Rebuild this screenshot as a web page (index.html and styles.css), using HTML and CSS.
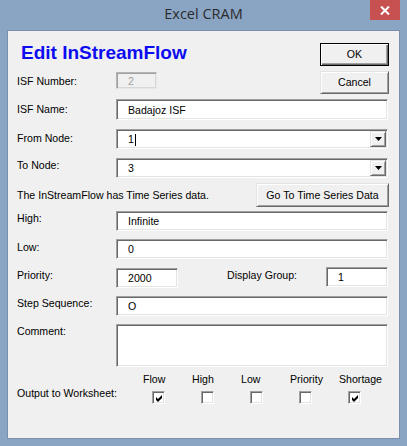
FILE: index.html
```html
<!DOCTYPE html>
<html>
<head>
<meta charset="utf-8">
<link rel="stylesheet" href="styles.css">
</head>
<body>
<div class="window">
  <div class="titlebar">
    <span class="title">Excel CRAM</span>
    <div class="close"><svg width="10" height="9" viewBox="0 0 10 9"><path d="M1 0.5 L9 8.5 M9 0.5 L1 8.5" stroke="#fff" stroke-width="2"/></svg></div>
  </div>
  <div class="client">
    <div class="row head">
      <h1 class="heading">Edit InStreamFlow</h1>
      <button class="btn btn-default">OK</button>
    </div>
    <div class="row r-num">
      <span class="lbl">ISF Number:</span>
      <div class="field num disabled">2</div>
      <button class="btn cancel">Cancel</button>
    </div>
    <div class="row r-name">
      <span class="lbl">ISF Name:</span>
      <div class="field wide">Badajoz ISF</div>
    </div>
    <div class="row r-from">
      <span class="lbl">From Node:</span>
      <div class="field wide combo"><span>1</span><span class="caret"></span><span class="drop"><svg width="7" height="4" viewBox="0 0 7 4"><path d="M0 0 H7 L3.5 4 Z" fill="#000"/></svg></span></div>
    </div>
    <div class="row r-to">
      <span class="lbl">To Node:</span>
      <div class="field wide combo"><span>3</span><span class="drop"><svg width="7" height="4" viewBox="0 0 7 4"><path d="M0 0 H7 L3.5 4 Z" fill="#000"/></svg></span></div>
    </div>
    <div class="row r-info">
      <span class="info">The InStreamFlow has Time Series data.</span>
      <button class="btn ts">Go To Time Series Data</button>
    </div>
    <div class="row r-high">
      <span class="lbl">High:</span>
      <div class="field wide">Infinite</div>
    </div>
    <div class="row r-low">
      <span class="lbl">Low:</span>
      <div class="field wide">0</div>
    </div>
    <div class="row r-prio">
      <span class="lbl">Priority:</span>
      <div class="field short">2000</div>
      <span class="lbl dg">Display Group:</span>
      <div class="field short dgf">1</div>
    </div>
    <div class="row r-step">
      <span class="lbl">Step Sequence:</span>
      <div class="field wide">O</div>
    </div>
    <div class="row r-comment">
      <span class="lbl">Comment:</span>
      <div class="field wide comment"></div>
    </div>
    <div class="row r-out">
      <span class="lbl out-lbl">Output to Worksheet:</span>
      <div class="checks">
        <span class="ch">Flow</span>
        <span class="ch">High</span>
        <span class="ch">Low</span>
        <span class="ch">Priority</span>
        <span class="ch">Shortage</span>
        <span class="cb"><svg width="7" height="7" viewBox="0 0 7 7"><path d="M0 2 L2 4 L6 0 L6 3 L2 7 L0 5 Z" fill="#000"/></svg></span>
        <span class="cb"></span>
        <span class="cb"></span>
        <span class="cb"></span>
        <span class="cb"><svg width="7" height="7" viewBox="0 0 7 7"><path d="M0 2 L2 4 L6 0 L6 3 L2 7 L0 5 Z" fill="#000"/></svg></span>
      </div>
    </div>
  </div>
</div>
</body>
</html>
```

FILE: styles.css
```css
html, body {
  margin: 0;
  padding: 0;
}
body {
  background: #8aa4c4;
  width: 407px;
  height: 446px;
  overflow: hidden;
  font-family: "Liberation Sans", Arial, sans-serif;
  font-size: 10.6px;
  color: #000;
}
.window {
  width: 407px;
  height: 446px;
}
.titlebar {
  height: 30px;
  display: grid;
  grid-template-columns: 1fr auto 1fr;
  align-items: start;
}
.title {
  grid-column: 2;
  font-family: "Open Sans", sans-serif;
  font-size: 14.5px;
  line-height: 20px;
  margin-top: 4px;
  color: #2b2b2b;
}
.close {
  grid-column: 3;
  justify-self: end;
  margin-right: 7px;
  width: 30px;
  height: 20px;
  background: #c75050;
  display: flex;
  align-items: center;
  justify-content: center;
}
.client {
  margin: 0 7px;
  height: 409px;
  box-sizing: border-box;
  border: 1px solid #7a8fab;
  background: #f0f0f0;
  padding: 12px 10px 0 9px;
}
.row {
  display: flex;
  align-items: flex-start;
}
.lbl {
  flex: none;
  width: 99px;
  line-height: 13px;
  padding-top: 1px;
  white-space: nowrap;
}
.heading {
  margin: 0 0 0 4px;
  font: bold 19px/19px "Liberation Sans", Arial, sans-serif;
  color: #0c0cf0;
}
.btn {
  flex: none;
  width: 69px;
  height: 23px;
  margin-left: auto;
  box-sizing: border-box;
  background: #f0f0f0;
  border: 1px solid;
  border-color: #e3e3e3 #696969 #696969 #e3e3e3;
  box-shadow: inset 1px 1px 0 #fff, inset -1px -1px 0 #a0a0a0;
  font: inherit;
  color: #000;
  padding: 0;
  line-height: 13px;
}
.btn-default {
  border-color: #000;
  box-shadow: inset 1px 1px 0 #fff, inset -1px -1px 0 #696969, inset -2px -2px 0 #a0a0a0;
}
.field {
  box-sizing: border-box;
  height: 20px;
  background: #fff;
  border: 1px solid;
  border-color: #a0a0a0 #fff #fff #a0a0a0;
  box-shadow: inset 1px 1px 0 #696969, inset -1px -1px 0 #e3e3e3;
  padding: 1px 0 0 11px;
  display: flex;
  align-items: center;
  line-height: 13px;
}
.wide {
  flex: 1;
  margin-right: 1px;
}
.num {
  width: 41px;
  height: 17px;
  margin-top: 1px;
}
.disabled {
  background: #f0f0f0;
  color: #a0a0a0;
  border-color: #b4b4b4 #e8e8e8 #e8e8e8 #b4b4b4;
  box-shadow: inset 1px 1px 0 #a0a0a0, inset -1px -1px 0 #d8d8d8;
}
.cancel {
  margin-left: auto;
}
.r-num { margin-top: 5px; }
.r-num .lbl { padding-top: 4px; }
.r-name { margin-top: 5px; }
.r-name .field { height: 21px; }
.r-name .lbl { padding-top: 4px; }
.r-from { margin-top: 9px; }
.r-from .lbl { padding-top: 3px; }
.r-to { margin-top: 9px; }
.combo {
  padding-right: 1px;
}
.caret {
  display: inline-block;
  width: 1px;
  height: 12px;
  background: #000;
  margin-left: 1px;
}
.drop {
  margin-left: auto;
  width: 16px;
  height: 16px;
  box-sizing: border-box;
  background: #f0f0f0;
  border: 1px solid;
  border-color: #e3e3e3 #696969 #696969 #e3e3e3;
  box-shadow: inset 1px 1px 0 #fff, inset -1px -1px 0 #a0a0a0;
  display: flex;
  align-items: center;
  justify-content: center;
  margin-top: -1px;
}
.r-info { margin-top: 5px; }
.info {
  line-height: 13px;
  padding-top: 6px;
}
.ts {
  width: 133px;
  height: 24px;
}
.r-high { margin-top: 4px; }
.r-low { margin-top: 8px; }
.r-low .lbl { padding-top: 2px; }
.r-prio { margin-top: 9px; }
.short {
  width: 62px;
  flex: none;
}
.dg {
  width: auto;
  margin-left: 49px;
}
.dgf {
  margin-left: auto;
  margin-right: 1px;
  margin-top: -1px;
}
.r-step { margin-top: 8px; }
.r-comment { margin-top: 8px; }
.comment { height: 43px; }
.r-out { margin-top: 6px; }
.out-lbl {
  width: 126px;
  padding-top: 14px;
}
.checks {
  display: grid;
  grid-template-columns: repeat(5, 49px);
  grid-template-rows: 13px 13px;
  row-gap: 5px;
}
.ch {
  line-height: 13px;
  white-space: nowrap;
}
.cb {
  width: 13px;
  height: 13px;
  margin-left: 9px;
  box-sizing: border-box;
  background: #fff;
  border: 1px solid;
  border-color: #a0a0a0 #fff #fff #a0a0a0;
  box-shadow: inset 1px 1px 0 #696969, inset -1px -1px 0 #e3e3e3;
  display: flex;
  align-items: center;
  justify-content: center;
}
.cb svg {
  margin: 1px 0 0 1px;
}
```
